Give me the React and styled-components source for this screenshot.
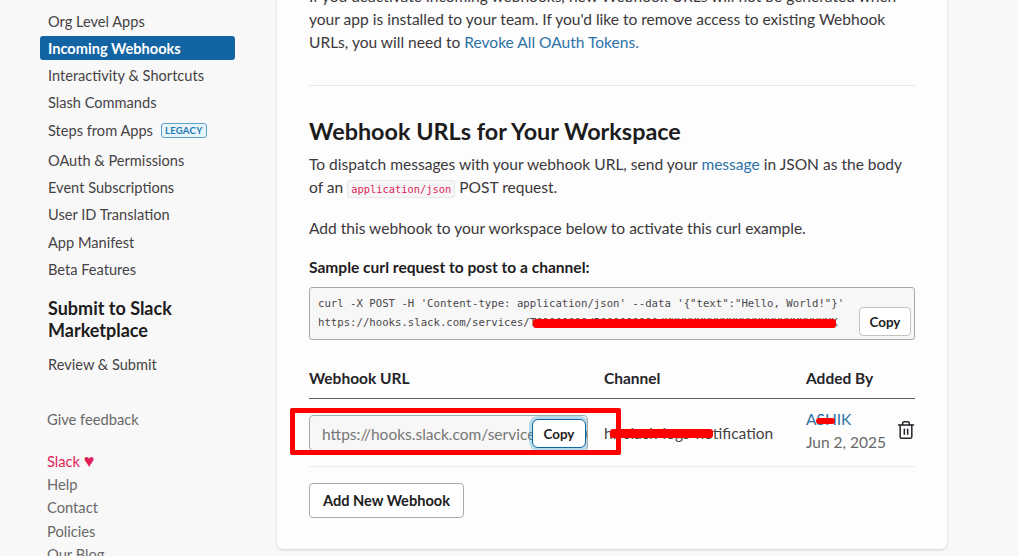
import React from 'react';
import styled, { createGlobalStyle } from 'styled-components';
import { Trash2 } from 'lucide-react';

const Global = createGlobalStyle`
  html, body { margin: 0; padding: 0; height: 100%; overflow: hidden; background: #f8f8f8; }
  body { font-family: Lato, "Noto Sans", sans-serif; color: #1d1c1d; }
`;
const Page = styled.div`
  position: relative; height: 556px; width: 1018px; overflow: hidden;
  display: grid; grid-template-columns: 277px 670px; align-items: start;
`;
const Sidebar = styled.aside`padding: 9px 42px 0 40px; display: flex; flex-direction: column;`;
const NavItem = styled.a`
  display: flex; align-items: center; gap: 8px; height: 24px; margin-bottom: 3.3px; padding: 0 8px;
  border-radius: 3px; font-size: 14.6px; color: ${p => p.$active ? '#fff' : '#454245'};
  font-weight: ${p => p.$active ? 700 : 400};
  background: ${p => p.$active ? '#1264a3' : 'transparent'};
`;
const StepsItem = styled(NavItem)`height: 27px; padding-bottom: 3px; box-sizing: border-box; margin-bottom: 3px;`;
const Legacy = styled.span`
  font-size: 9.5px; font-weight: 700; color: #1d7ab5; letter-spacing: .3px; line-height: 13px;
  background: #e8f5fa; border: 1px solid #5ba3cf; border-radius: 3px; padding: 0 3px;
`;
const SideHeading = styled.h3`
  margin: 12px 0 12px; padding: 0 8px; font-size: 18px; line-height: 22px; font-weight: 700; color: #1d1c1d;
`;
const FooterLinks = styled.div`display: flex; flex-direction: column; margin: 28px 0 0; padding-left: 7px;`;
const FooterLink = styled.a`
  font-size: 14.7px; line-height: 23.3px; color: ${p => p.$pink ? '#e01e5a' : '#696969'};
  margin-bottom: ${p => p.$gap || 0}px;
`;
const Heart = styled.span`font-size: 18px; line-height: 1;`;
const Card = styled.main`
  margin-top: -40px; height: 589px; box-sizing: border-box; padding: 25px 32px 0;
  background: #fdfdfd; border-radius: 6px; box-shadow: 0 1px 3px rgba(0,0,0,.16);
`;
const Para = styled.p`margin: 0 0 ${p => p.$mb || 0}px; font-size: 15.56px; line-height: 23px; color: #3b383b;`;
const Link = styled.a`color: #2e72a8;`;
const Rule = styled.hr`border: 0; border-top: 1px solid #e8e8e8; margin: 31px 0 28px;`;
const Heading = styled.h2`margin: 0 0 5px; font-size: 23.4px; line-height: 34px; font-weight: 700; color: #1d1c1d;`;
const Code = styled.code`
  font: 10.4px "DejaVu Sans Mono", monospace; color: #e01e5a; background: #f6f6f6;
  border: 1px solid #e8e8e8; border-radius: 3px; padding: 2px 3px;
`;
const Label = styled.div`margin-top: 16px; font-size: 15.56px; line-height: 23px; font-weight: 700; color: #1d1c1d;`;
const CodeBox = styled.div`
  position: relative; box-sizing: border-box; height: 53px; margin-top: 8px; padding: 7px 8px;
  background: #f7f7f7; border: 1px solid #a9a9a9; border-radius: 3px;
  font: 10.66px/18.5px "DejaVu Sans Mono", monospace; color: #4a474a; white-space: pre;
`;
const CopyButton = styled.button`
  position: absolute; right: 3px; bottom: 3px; width: 52px; height: 29px; padding: 0;
  font: 700 13.4px Lato, sans-serif; color: #1d1c1d; background: #fff;
  border: 1px solid #c4c4c4; border-radius: 4px;
`;
const Row = styled.div`
  display: grid; grid-template-columns: 295px 202px 1fr; 
  border-bottom: ${p => p.$head ? '1px solid #5e5d60' : '1px solid #ececec'};
  height: ${p => p.$head ? 42 : 68}px; box-sizing: border-box; align-items: ${p => p.$head ? 'center' : 'start'};
  margin-top: ${p => p.$head ? 17 : 0}px;
  padding-top: ${p => p.$head ? 0 : 8}px;
`;
const HeadCell = styled.div`font-size: 15.5px; font-weight: 700; color: #26242a;`;
const UrlField = styled.div`
  position: relative; box-sizing: border-box; width: 279px; height: 36px; margin-top: 8px; padding-left: 12px;
  font-size: 15.5px; line-height: 36px; color: #767676; background: #f7f7f7;
  border: 1px solid #a9a9a9; border-radius: 4px; overflow: hidden; white-space: nowrap;
`;
const FocusCopy = styled(CopyButton)`
  right: 1px; bottom: 2px; width: 54px; height: 29px; border: 1px solid #1264a3;
  box-shadow: 0 0 0 3px rgba(29,155,209,.3); border-radius: 6px; 
`;
const ChannelCell = styled.div`font-size: 15.5px; margin-top: 17px; color: #454245;`;
const AddedCell = styled.div`display: flex; justify-content: space-between; width: 109px;`;
const AddedText = styled.div`font-size: 15.5px; line-height: 23px; color: #696969; padding-top: 1px;`;
const AddedLink = styled(Link)`display: block;`;
const TrashWrap = styled.span`margin-top: 12.5px; margin-right: -1px; color: #26242a; display: flex;`;
const AddButton = styled.button`
  display: block; margin-top: 16px; box-sizing: border-box; width: 155px; height: 35px; padding: 0;
  font: 700 14.6px Lato, sans-serif; color: #1d1c1d; background: #fff;
  border: 1px solid #aaa; border-radius: 4px;
`;
const Highlight = styled.div`
  position: absolute; left: 290px; top: 408px; width: 331px; height: 47px; box-sizing: border-box;
  border: 5px solid #fe0000; border-radius: 2px;
`;
const Scribble = styled.div`
  position: absolute; background: #fe0000; border-radius: 3px;
  left: ${p => p.$x}px; top: ${p => p.$y}px; width: ${p => p.$w}px; height: ${p => p.$h}px;
`;

const nav1 = ['Org Level Apps', 'Incoming Webhooks', 'Interactivity & Shortcuts', 'Slash Commands'];
const nav2 = ['OAuth & Permissions', 'Event Subscriptions', 'User ID Translation', 'App Manifest', 'Beta Features'];

export default function App() {
  return (
    <Page>
      <Global />
      <Sidebar>
        {nav1.map(n => <NavItem key={n} $active={n === 'Incoming Webhooks'}>{n}</NavItem>)}
        <StepsItem>Steps from Apps <Legacy>LEGACY</Legacy></StepsItem>
        {nav2.map(n => <NavItem key={n}>{n}</NavItem>)}
        <SideHeading>Submit to Slack Marketplace</SideHeading>
        <NavItem>Review &amp; Submit</NavItem>
        <FooterLinks>
          <FooterLink $gap={18.5}>Give feedback</FooterLink>
          <FooterLink $pink>Slack <Heart>♥</Heart></FooterLink>
          <FooterLink>Help</FooterLink>
          <FooterLink>Contact</FooterLink>
          <FooterLink>Policies</FooterLink>
          <FooterLink>Our Blog</FooterLink>
        </FooterLinks>
      </Sidebar>
      <Card>
        <Para>If you deactivate incoming webhooks, new Webhook URLs will not be generated when your app is installed to your team. If you'd like to remove access to existing Webhook URLs, you will need to <Link>Revoke All OAuth Tokens.</Link></Para>
        <Rule />
        <Heading>Webhook URLs for Your Workspace</Heading>
        <Para $mb={18}>To dispatch messages with your webhook URL, send your <Link>message</Link> in JSON as the body of an <Code>application/json</Code> POST request.</Para>
        <Para>Add this webhook to your workspace below to activate this curl example.</Para>
        <Label>Sample curl request to post to a channel:</Label>
        <CodeBox>
          {`curl -X POST -H 'Content-type: application/json' --data '{"text":"Hello, World!"}'\nhttps://hooks.slack.com/services/T01000000/B000000000/XXXXXXXXXXXXXXXXXXXXXXXXXXX`}
          <CopyButton>Copy</CopyButton>
        </CodeBox>
        <Row $head>
          <HeadCell>Webhook URL</HeadCell>
          <HeadCell>Channel</HeadCell>
          <HeadCell>Added By</HeadCell>
        </Row>
        <Row>
          <UrlField>https://hooks.slack.com/services/T01000000<FocusCopy>Copy</FocusCopy></UrlField>
          <ChannelCell>hr-slack-logs-notification</ChannelCell>
          <AddedCell>
            <AddedText><AddedLink>ASHIK</AddedLink>Jun 2, 2025</AddedText>
            <TrashWrap><Trash2 size={20} strokeWidth={1.8} /></TrashWrap>
          </AddedCell>
        </Row>
        <AddButton>Add New Webhook</AddButton>
      </Card>
      <Highlight />
      <Scribble $x={533} $y={319} $w={303} $h={9} />
      <Scribble $x={610} $y={429} $w={103} $h={9} />
      <Scribble $x={816} $y={418} $w={19} $h={6} />
    </Page>
  );
}
